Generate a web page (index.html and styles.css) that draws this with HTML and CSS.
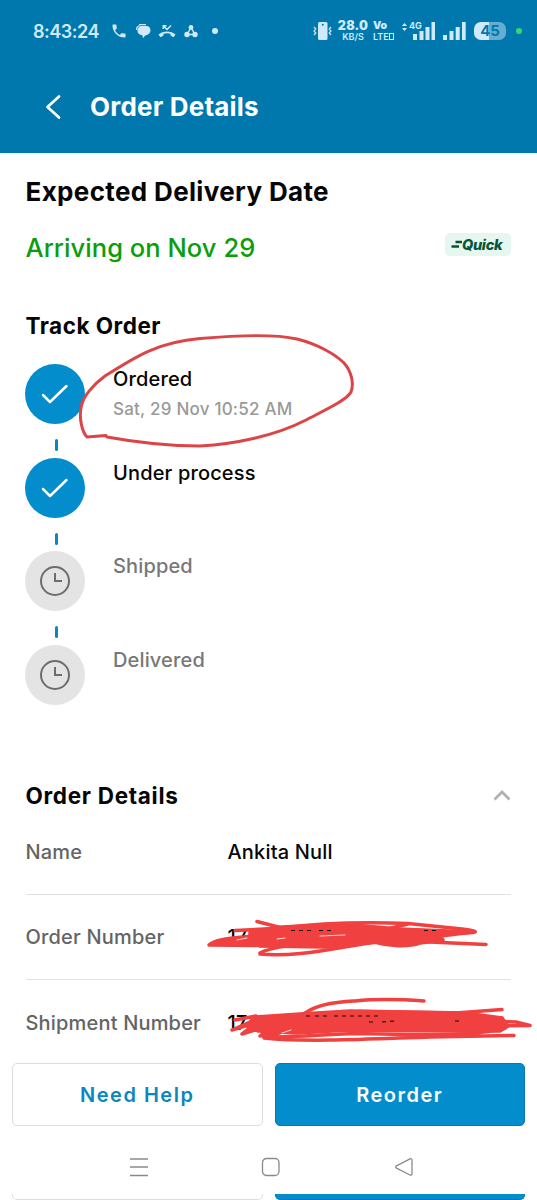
FILE: index.html
```
<!DOCTYPE html>
<html lang="en">
	<head>
		<meta charset="utf-8"/>
		<title>Order Details</title>
		<link rel="stylesheet" href="styles.css">
	</head>
	<body>
		<header>
			<div class="statusbar">
				<div class="status-left">
					<span class="clock">8:43:24</span>
					<svg width="16" height="16" viewBox="1 1 22 22"><path d="M6.600 10.800c1.400 2.800 3.800 5.100 6.600 6.600l2.200-2.200c.3-.3.7-.4 1-.2 1.100.4 2.300.6 3.600.6.6 0 1 .4 1 1V20c0 .6-.4 1-1 1C10.600 21 3 13.400 3 4c0-.6.4-1 1-1h3.500c.6 0 1 .4 1 1 0 1.300.2 2.500.6 3.600.1.300 0 .7-.2 1z"/></svg>
					<svg class="chat" width="16" height="16" viewBox="0 0 16 16"><path d="M4 1.700h7M1.500 7c0-2.800 1.200-4 3-4.200" fill="none" stroke="#cfeafa" stroke-width="1.200"/><path d="M6.500 3h5C14 3 15.500 5 15.500 7.300S13.500 12 11 12.200c-.8.300-1.800 1.300-3 3l-.7-3C4 12 2.500 10 2.500 7.700S4 3 6.500 3z"/></svg>
					<svg class="missed" width="18" height="16" viewBox="0 0 18 16"><path d="M.5 11.500C5 7.500 13 7.500 17.500 11.500l-2 2.700-3-1.700v-1.700c-2-.7-5-.7-7 0v1.700l-3 1.700z"/><path d="M13 2.500L9 6.500 5.500 3M5.300 6V2.800h3.200" fill="none" stroke="#cfeafa" stroke-width="1.500"/></svg>
					<svg class="nodes" width="14" height="16" viewBox="0 0 14 16"><path d="M7 4.500L3 11.500h8z" fill="none" stroke="#cfeafa" stroke-width="1.400"/><circle cx="7" cy="4.500" r="2.400"/><circle cx="3" cy="11.500" r="2.700"/><circle cx="11" cy="11.500" r="2.700"/></svg>
					<span class="dot"></span>
				</div>
				<div class="status-right">
					<svg width="19" height="20" viewBox="0 0 19 20"><rect x="5" y="1" width="9.500" height="18" rx="1.500"/><circle cx="9.800" cy="3.700" r="1" fill="#0078ad"/><path d="M1 6l1.800 2L1 10l1.800 2L1 14M18 6l-1.800 2L18 10l-1.800 2L18 14" fill="none" stroke="#cfeafa" stroke-width="1.200"/></svg>
					<div class="speed"><b>28.0</b><span>KB/S</span></div>
					<div class="volte"><b>Vo</b><span>LTE<i></i></span></div>
					<div class="network">
						<svg class="arrows" width="5" height="8" viewBox="0 0 5 8"><path d="M2.500 0L5 3H0zM2.500 8L0 5h5z"/></svg>
						<span>4G</span>
						<svg width="34" height="20" viewBox="0 0 34 20"><path d="M11 13h4v6h-4zM17.500 10h4v9h-4zM23.500 6h4v13h-4zM29.500 1h3.500v18h-3.500z"/></svg>
					</div>
					<svg class="signal" width="24" height="20" viewBox="0 0 24 20"><path d="M0 14h4v5H0zM6.500 10h4v9h-4zM12.700 6h4v13h-4zM19 1h3.700v18H19z"/></svg>
					<div class="battery">45</div>
					<span class="green-dot"></span>
				</div>
			</div>
			<div class="titlebar">
				<svg width="16" height="26" viewBox="0 0 16 26"><path d="M14 2.500L2.500 13 14 23.500" fill="none" stroke="#fff" stroke-width="2.700" stroke-linecap="round" stroke-linejoin="round"/></svg>
				<h1>Order Details</h1>
			</div>
		</header>
		<main>
			<h2 class="expected">Expected Delivery Date</h2>
			<div class="arriving">
				<span class="date">Arriving on Nov 29</span>
				<span class="quick"><svg width="11" height="10" viewBox="0 0 11 10"><path d="M4.500 3H11M.5 7.500H8" stroke="#08543a" stroke-width="2.500"/></svg>Quick</span>
			</div>
			<h3 class="track">Track Order</h3>
			<div class="timeline">
				<div class="step done">
					<div class="circle"><svg width="28" height="22" viewBox="0 0 28 22"><path d="M2 12l7 7L25.500 3" fill="none" stroke="#fff" stroke-width="2.500" stroke-linecap="round" stroke-linejoin="round"/></svg></div>
					<div class="label"><p>Ordered</p><small>Sat, 29 Nov 10:52 AM</small></div>
				</div>
				<div class="step done">
					<div class="circle"><svg width="28" height="22" viewBox="0 0 28 22"><path d="M2 12l7 7L25.500 3" fill="none" stroke="#fff" stroke-width="2.500" stroke-linecap="round" stroke-linejoin="round"/></svg></div>
					<div class="label"><p>Under process</p></div>
				</div>
				<div class="step">
					<div class="circle"><svg width="30" height="30" viewBox="0 0 30 30"><path d="M15 7v8h7" fill="none" stroke="#6d6d6d" stroke-width="2"/><circle cx="15" cy="15" r="14" fill="none" stroke="#6d6d6d" stroke-width="2"/></svg></div>
					<div class="label"><p>Shipped</p></div>
				</div>
				<div class="step">
					<div class="circle"><svg width="30" height="30" viewBox="0 0 30 30"><path d="M15 7v8h7" fill="none" stroke="#6d6d6d" stroke-width="2"/><circle cx="15" cy="15" r="14" fill="none" stroke="#6d6d6d" stroke-width="2"/></svg></div>
					<div class="label"><p>Delivered</p></div>
				</div>
				<!-- hand drawn ring around the order time -->
				<svg class="ring" width="290" height="120" viewBox="75 330 290 120"><path d="M106 435.500L87 437C82 432 79 418 81 408C82 397 94 384 105 376C135 357 158 342 200 338.500C240 335 275 334 297 339C317 344 335 354 344 363C352 372 354 384 351 392C347 400 325 410 306 420C275 436 235 444 200 446C170 446 145 444 107 437"/></svg>
			</div>
			<div class="details-head">
				<h3>Order Details</h3>
				<svg width="18" height="12" viewBox="0 0 18 12"><path d="M1.500 10.500L9 3l7.500 7.500" fill="none" stroke="#b0b0b5" stroke-width="2.700"/></svg>
			</div>
			<div class="row"><span>Name</span><b>Ankita Null</b></div>
			<div class="row">
				<span>Order Number</span><b>17</b>
				<svg class="scribble" width="337" height="65" viewBox="200 905 337 65">
					<path class="fill" d="M250 932L282 927L342 924L399 929L473 932L441 936L443 940L420 943C405 948 385 945 374 942L325 947L260 946L254 943L215 944L250 937z"/>
					<path d="M257 921.500L282 928C320 923 365 922 408 923.500L462 929C485 932 475 933 455 933L438 936M486 944.500L430 942L380 937M235 930.500L285 928M225 945H209C216 938 240 938 252 936M260 953C270 947 300 944 330 941M260 954C300 958 340 946 379 942M383 930L408 924M210 945L258 945.500L330 946"/>
					<path class="ink" d="M291 930.500h24M319 930.500h12M424 930.500h12"/>
					<path class="thin" d="M237 940l10-2M277 939l8-1M320 936l25-1"/>
				</svg>
			</div>
			<div class="row last">
				<span>Shipment Number</span><b>17</b>
				<svg class="scribble" width="337" height="65" viewBox="200 990 337 65">
					<path class="fill" d="M256 1017L300 1014L350 1011L465 1013L502 1018L508 1026L500 1031L440 1031L350 1030L297 1033L258 1031L248 1027z"/>
					<path d="M305 1013C320 1003 340 1002 355 1001C375 999 395 999 424 1001M235 1020L256 1016L250 1022L232 1030L258 1022L242 1034L275 1024L260 1036L300 1026L264 1038C310 1043 390 1038 430 1037L514 1035.500M266 1037C300 1037 330 1034 355 1033.500C400 1034 470 1038 505 1028M300 1015L360 1011.500L456 1013L502 1009.500M440 1017L502 1018M480 1021L516 1022L530 1025.500L490 1026"/>
					<path class="ink" d="M306 1016h6M315 1016h14M334 1016h20M358 1016h20M369 1022h8M382 1022l13-1M455 1021h6"/>
					<path class="thin" d="M282 1033l9-3"/>
				</svg>
			</div>
		</main>
		<footer>
			<div class="buttons">
				<button class="help">Need Help</button>
				<button class="reorder">Reorder</button>
			</div>
			<div class="navbar">
				<svg width="20" height="20" viewBox="0 0 20 20"><path d="M1 2h18M1 10h18M1 18.500h18"/></svg>
				<svg width="20" height="20" viewBox="0 0 20 20"><rect x="1.500" y="1.500" width="16.500" height="17" rx="4"/></svg>
				<svg width="20" height="20" viewBox="0 0 20 20"><path d="M16 1.800L2.500 8.800Q.8 10 2.500 11.200L16 18Q18 18.500 18 16.500V3.300Q18 1.300 16 1.800z"/></svg>
			</div>
			<div class="buttons peek">
				<div class="help"></div>
				<div class="reorder"></div>
			</div>
		</footer>
	</body>
</html>
```
FILE: styles.css
```
* {
	box-sizing: border-box;
}
body {
	margin: 0;
	width: 537px;
	height: 1200px;
	overflow: hidden;
	display: flex;
	flex-direction: column;
	background-color: #fff;
	font-family: Inter, "Liberation Sans", sans-serif;
	color: #060606;
}
svg {
	flex: none;
}
h1, h2, h3, p {
	margin: 0;
}
header {
	height: 153px;
	background-color: #0078ad;
	color: #fff;
}
.statusbar {
	height: 62px;
	display: flex;
	justify-content: space-between;
	padding: 0 15px 0 33px;
	color: #cfeafa;
	fill: #cfeafa;
}
.status-left, .status-right {
	display: flex;
	align-items: center;
}
.clock {
	width: 78px;
	font-size: 18px;
	font-weight: 600;
	letter-spacing: -0.5px;
}
.chat {
	margin-left: 8px;
}
.missed {
	margin-left: 7px;
}
.nodes {
	margin-left: 8px;
}
.dot {
	width: 6px;
	height: 6px;
	margin-left: 14px;
	border-radius: 50%;
	background-color: #cfeafa;
}
.speed, .volte {
	display: flex;
	flex-direction: column;
	font-size: 9px;
	line-height: 10px;
	font-weight: 600;
}
.speed {
	width: 30px;
	margin-left: 6px;
	align-items: center;
}
.speed b {
	font-size: 12.500px;
	line-height: 12px;
	letter-spacing: 0.2px;
}
.volte {
	width: 25px;
	margin-left: 5px;
}
.volte b {
	font-size: 10.500px;
	line-height: 12px;
}
.volte i {
	display: inline-block;
	width: 5px;
	height: 7px;
	border: 1px solid #cfeafa;
}
.network {
	position: relative;
	height: 20px;
	margin-left: 4px;
}
.network .arrows {
	position: absolute;
	left: 0;
	top: 2px;
}
.network span {
	position: absolute;
	left: 7px;
	top: 0;
	font-size: 9px;
	line-height: 10px;
	font-weight: 700;
}
.signal {
	margin-left: 7px;
}
.battery {
	width: 32px;
	height: 18px;
	margin-left: 7px;
	border-radius: 7px;
	background: linear-gradient(90deg, #cfeafa 48%, #66add0 48%);
	color: #0078ad;
	font-size: 15px;
	line-height: 18px;
	font-weight: 700;
	text-align: center;
}
.green-dot {
	width: 6px;
	height: 6px;
	margin-left: 10px;
	border-radius: 50%;
	background-color: #34d977;
}
.titlebar {
	height: 90px;
	display: flex;
	align-items: center;
	padding-left: 45px;
}
.titlebar h1 {
	margin: -2px 0 0 29px;
	font-size: 26px;
	font-weight: 700;
	letter-spacing: 0.200px;
}
main {
	padding: 23px 26px 0 25.500px;
	height: 897px;
}
.expected {
	font-size: 26px;
	font-weight: 650;
	line-height: 32px;
	letter-spacing: 0.350px;
}
.arriving {
	display: flex;
	align-items: center;
	justify-content: space-between;
	height: 32px;
	margin-top: 23px;
	color: #0a9e0a;
}
.date {
	font-size: 25.500px;
	font-weight: 500;
	letter-spacing: 0.050px;
}
.quick {
	display: flex;
	align-items: center;
	width: 66px;
	height: 23px;
	margin-top: -6px;
	padding-left: 6px;
	border-radius: 5px;
	background-color: #e5f7ee;
	color: #08543a;
	font-size: 14.500px;
	font-weight: 800;
	font-style: italic;
	letter-spacing: -0.300px;
}
.track {
	margin-top: 47px;
	font-size: 22.500px;
	font-weight: 650;
	line-height: 32px;
	letter-spacing: 0.500px;
}
.timeline {
	position: relative;
	margin-top: 22px;
}
.step {
	position: relative;
	display: flex;
	height: 93.600px;
	color: #777;
}
.step:last-of-type {
	height: 60px;
}
.done {
	color: #060606;
}
.circle {
	display: flex;
	align-items: center;
	justify-content: center;
	width: 60px;
	height: 60px;
	margin-left: -0.500px;
	border-radius: 50%;
	background-color: #e4e4e4;
}
.done .circle {
	background-color: #038dcd;
}
/* dash between two steps */
.step:not(:last-of-type)::after {
	content: "";
	position: absolute;
	left: 29.500px;
	top: 75px;
	width: 3px;
	height: 12px;
	border-radius: 2px;
	background-color: #0a86c0;
}
.label {
	margin-left: 28px;
	padding-top: 1px;
	font-size: 20px;
	line-height: 29px;
	font-weight: 500;
	letter-spacing: 0.150px;
}
.label small {
	display: block;
	color: #999;
	font-size: 17px;
	line-height: 31px;
	letter-spacing: 0.220px;
}
.ring {
	position: absolute;
	left: 49.500px;
	top: -34px;
	fill: none;
	stroke: #dc4548;
	stroke-width: 3;
	stroke-linecap: round;
	stroke-linejoin: round;
}
.details-head {
	display: flex;
	justify-content: space-between;
	align-items: center;
	height: 30px;
	margin-top: 75.500px;
}
.details-head h3 {
	font-size: 22.500px;
	font-weight: 650;
	letter-spacing: 0.700px;
}
.row {
	position: relative;
	display: flex;
	align-items: center;
	height: 85px;
	border-bottom: 1.500px solid #e2e2e2;
	font-size: 20px;
	letter-spacing: 0.180px;
}
.last {
	border-bottom: none;
}
.row span {
	width: 202px;
	color: #646464;
	font-weight: 500;
}
.row b {
	font-weight: 500;
}
.scribble {
	position: absolute;
	left: 174.500px;
	top: 10px;
	fill: none;
	stroke: #f04040;
	stroke-width: 3.500;
	stroke-linecap: round;
	stroke-linejoin: round;
}
.scribble .fill {
	fill: #f04040;
}
.scribble .ink {
	stroke: #111;
	stroke-width: 1.200;
	stroke-linecap: butt;
	stroke-dasharray: 4 4;
}
.scribble .thin {
	stroke: #fff;
	stroke-width: 0.800;
}
footer {
	height: 150px;
	padding-top: 13px;
	background-color: #fff;
}
.buttons {
	display: flex;
	gap: 12px;
	padding: 0 12px;
}
.buttons > * {
	flex: 1;
	height: 63px;
	border-radius: 5px;
	font-family: inherit;
	font-size: 20px;
	font-weight: 600;
	letter-spacing: 1.500px;
}
.help {
	border: 1.500px solid #dedede;
	background-color: #fff;
	color: #0a86c0;
}
.reorder {
	border: 1px solid #0878ad;
	background-color: #038dcd;
	color: #fff;
}
.navbar {
	display: flex;
	justify-content: center;
	align-items: center;
	gap: 112.500px;
	height: 68px;
	padding: 13px 0 0 5px;
	fill: none;
	stroke: #8a8a8a;
	stroke-width: 1.300;
}
.peek > * {
	height: 6px;
	border-top: none;
	border-radius: 0 0 5px 5px;
}
```
